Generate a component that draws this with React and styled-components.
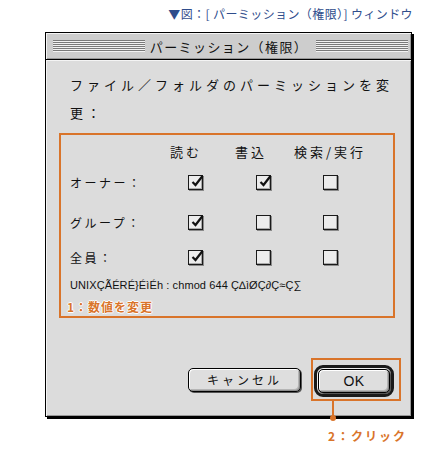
import React from 'react';
import styled, { createGlobalStyle } from 'styled-components';

const GlobalStyle = createGlobalStyle`
  html, body {
    margin: 0;
    padding: 0;
    background: #fff;
  }
  body {
    font-family: "Noto Sans CJK JP", "Noto Sans", sans-serif;
    color: #111;
  }
`;

const ORANGE = '#d9742a';

const Page = styled.div`
  width: 430px;
  height: 458px;
  box-sizing: border-box;
  padding: 5px 0 0 45px;
  display: flex;
  flex-direction: column;
`;

const Caption = styled.div`
  align-self: flex-end;
  margin-right: 17px;
  font-size: 12px;
  line-height: 18px;
  letter-spacing: 0.4px;
  color: #2f4d8c;
`;

const Window = styled.div`
  margin-top: 9px;
  width: 367px;
  box-sizing: border-box;
  border: 1px solid #000;
  box-shadow: 2px 2px 0 #000;
  background: #dcdcdc;
  display: flex;
  flex-direction: column;
`;

const TitleBar = styled.div`
  height: 26px;
  border-bottom: 1px solid #000;
  background: #cdcdcd;
  box-shadow: inset 1px 1px 0 #f4f4f4, inset -1px -1px 0 #999;
  display: flex;
  align-items: center;
  padding: 0 3px 0 7px;
`;

const Stripes = styled.div`
  flex: 1;
  height: 12px;
  background: repeating-linear-gradient(
    to bottom,
    #7a7a7a 0,
    #7a7a7a 1px,
    #f2f2f2 1px,
    #f2f2f2 2px
  );
`;

const Title = styled.div`
  font-size: 13px;
  letter-spacing: 1.4px;
  margin: 0 8px 0 5px;
  color: #111;
`;

const Body = styled.div`
  padding: 11px 10px 15px 13px;
  display: flex;
  flex-direction: column;
  box-shadow: inset 1px 1px 0 #f4f4f4, inset -1px -1px 0 #999;
`;

const Description = styled.div`
  margin-left: 11px;
  font-size: 13px;
  line-height: 28px;
  letter-spacing: 4px;
`;

const Group = styled.div`
  margin-top: 6px;
  width: 336px;
  box-sizing: border-box;
  border: 2px solid ${ORANGE};
  padding: 0 0 1px 9px;
  display: flex;
  flex-direction: column;
`;

const Grid = styled.div`
  display: grid;
  grid-template-columns: 95px 60px 76px 58px;
  grid-template-rows: 32px 30px 50px 20px;
  align-items: center;
`;

const Header = styled.div`
  justify-self: center;
  font-size: 13px;
  letter-spacing: 3px;
  transform: translateX(${(p) => p.shift || 0}px);
  white-space: nowrap;
`;

const RowLabel = styled.div`
  font-size: 12px;
  letter-spacing: 2.5px;
`;

const Box = styled.div`
  justify-self: center;
  width: 15px;
  height: 15px;
  box-sizing: border-box;
  border: 1px solid #1a1a1a;
  background: #ececec;
  box-shadow: inset -1px -1px 0 #aaa, 1px 1px 0 #8a8a8a;
  position: relative;
`;

const Tick = styled.svg`
  position: absolute;
  left: 1px;
  top: -3px;
`;

const Unix = styled.div`
  margin-top: 8px;
  font-family: "Liberation Sans", "DejaVu Sans", sans-serif;
  font-size: 11px;
  line-height: 20px;
  letter-spacing: 0.1px;
  color: #111;
`;

const Note = styled.div`
  margin: 4px 0 0 -3px;
  font-size: 12px;
  font-weight: bold;
  line-height: 16px;
  letter-spacing: 1px;
  color: ${ORANGE};
  text-shadow: 1px 0 0 #fff, -1px 0 0 #fff, 0 1px 0 #fff, 0 -1px 0 #fff;
`;

const ButtonRow = styled.div`
  margin-top: 40px;
  display: flex;
  justify-content: flex-end;
  align-items: center;
  gap: 10px;
`;

const MacButton = styled.div`
  width: ${(p) => p.w}px;
  height: 24px;
  box-sizing: border-box;
  border: 1px solid #000;
  border-radius: 5px;
  background: #dedede;
  box-shadow: inset 1px 1px 0 #fff, inset -1px -1px 0 #8c8c8c,
    inset -2px -2px 0 #b5b5b5, 1px 1px 0 #555;
  display: flex;
  align-items: center;
  justify-content: center;
  font-size: ${(p) => (p.latin ? 14 : 12)}px;
  font-family: ${(p) =>
    p.latin
      ? '"Liberation Sans", "DejaVu Sans", sans-serif'
      : '"Noto Sans CJK JP", sans-serif'};
  letter-spacing: ${(p) => (p.latin ? 0.5 : 3)}px;
  color: #111;
`;

const DefaultRing = styled.div`
  box-sizing: border-box;
  width: 80px;
  height: 32px;
  border: 3px solid #1a1a1a;
  border-radius: 9px;
  padding: 1px;
  background: #b8b8b8;
  box-shadow: inset 1px 1px 0 #eee;
  display: flex;
`;

const Callout = styled.div`
  position: relative;
  border: 2px solid ${ORANGE};
  padding: 5px 5px 2px 1px;
`;

const Leader = styled.div`
  position: absolute;
  left: 19px;
  top: calc(100% + 2px);
  width: 2px;
  height: 17px;
  background: ${ORANGE};

  &::after {
    content: '';
    position: absolute;
    left: -2px;
    bottom: -3px;
    width: 6px;
    height: 6px;
    border-radius: 50%;
    background: ${ORANGE};
  }
`;

const CalloutLabel = styled.div`
  position: absolute;
  left: 15px;
  top: calc(100% + 28px);
  white-space: nowrap;
  font-size: 12px;
  font-weight: bold;
  letter-spacing: 2px;
  color: ${ORANGE};
`;

const Check = ({ on }) => (
  <Box>
    {on && (
      <Tick width="15" height="15" viewBox="0 0 15 15">
        <path d="M2.5 9 L5.5 12 L12.5 3" fill="none" stroke="#111" strokeWidth="2.2" />
      </Tick>
    )}
  </Box>
);

const rows = [
  { label: 'オーナー：', perms: [true, true, false] },
  { label: 'グループ：', perms: [true, false, false] },
  { label: '全員：', perms: [true, false, false] },
];

export default function App() {
  return (
    <Page>
      <GlobalStyle />
      <Caption>▼図：[ パーミッション（権限）] ウィンドウ</Caption>
      <Window>
        <TitleBar>
          <Stripes />
          <Title>パーミッション（権限）</Title>
          <Stripes />
        </TitleBar>
        <Body>
          <Description>
            ファイル／フォルダのパーミッションを変
            <br />
            更：
          </Description>
          <Group>
            <Grid>
              <div />
              <Header shift={-9}>読む</Header>
              <Header shift={-12}>書込</Header>
              <Header>検索/実行</Header>
              {rows.map((r) => (
                <React.Fragment key={r.label}>
                  <RowLabel>{r.label}</RowLabel>
                  {r.perms.map((p, i) => (
                    <Check key={i} on={p} />
                  ))}
                </React.Fragment>
              ))}
            </Grid>
            <Unix>UNIXÇÃÉRÉ}ÉìÉh : chmod 644 Ç∆ìØÇ∂Ç≈Ç∑</Unix>
            <Note>1：数値を変更</Note>
          </Group>
          <ButtonRow>
            <MacButton w={113}>キャンセル</MacButton>
            <Callout>
              <DefaultRing>
                <MacButton w={72} latin>
                  OK
                </MacButton>
              </DefaultRing>
              <Leader />
              <CalloutLabel>2：クリック</CalloutLabel>
            </Callout>
          </ButtonRow>
        </Body>
      </Window>
    </Page>
  );
}
